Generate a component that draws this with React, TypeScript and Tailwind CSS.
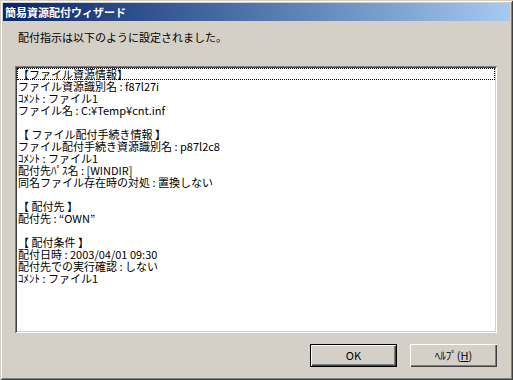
import React from "react";

const lines: string[] = [
  "【ファイル資源情報】",
  "ファイル資源識別名 : f87l27i",
  "ｺﾒﾝﾄ : ファイル1",
  "ファイル名 : C:¥Temp¥cnt.inf",
  "",
  "【 ファイル配付手続き情報 】",
  "ファイル配付手続き資源識別名 : p87l2c8",
  "ｺﾒﾝﾄ : ファイル1",
  "配付先ﾊﾟｽ名 : [WINDIR]",
  "同名ファイル存在時の対処 : 置換しない",
  "",
  "【 配付先 】",
  "配付先 : \u201COWN\u201D",
  "",
  "【 配付条件 】",
  "配付日時 : 2003/04/01 09:30",
  "配付先での実行確認 : しない",
  "ｺﾒﾝﾄ : ファイル1",
];

export default function App() {
  return (
    <div
      className="w-[513px] h-[380px] bg-[#d4d0c8] p-[3px] flex flex-col text-[11px] text-black shadow-[inset_1px_1px_#d4d0c8,inset_-1px_-1px_#404040,inset_2px_2px_#ffffff,inset_-2px_-2px_#808080]"
      style={{ fontFamily: '"Noto Sans CJK JP", "Liberation Sans", sans-serif' }}
    >
      <div className="h-[18px] bg-gradient-to-r from-[#0a246a] to-[#a6caf0] flex items-center pl-[2px]">
        <span className="text-white font-bold text-[11px] leading-[12px]">簡易資源配付ウィザード</span>
      </div>
      <div className="mt-[10px] pl-[15px] h-[12px] leading-[12px]">配付指示は以下のように設定されました。</div>
      <div className="mt-[23px] ml-[12px] w-[482px] h-[267px] bg-white p-[2px] shadow-[inset_1px_1px_#808080,inset_-1px_-1px_#ffffff,inset_2px_2px_#404040,inset_-2px_-2px_#d4d0c8]">
        <div className="flex flex-col">
          {lines.map((l, i) => (
            <div
              key={i}
              className={
                i === 0
                  ? "h-[12px] leading-[12px] pl-px whitespace-pre outline-1 outline-dotted outline-black -outline-offset-1"
                  : "h-[12px] leading-[12px] pl-px whitespace-pre"
              }
            >
              {l}
            </div>
          ))}
        </div>
      </div>
      <div className="mt-[11px] flex justify-end gap-[13px] pr-[13px]">
        <div className="w-[87px] h-[23px] border border-black">
          <div className="w-full h-full flex items-center justify-center shadow-[inset_1px_1px_#ffffff,inset_-1px_-1px_#404040,inset_-2px_-2px_#808080]">
            OK
          </div>
        </div>
        <div className="w-[87px] h-[23px] flex items-center justify-center shadow-[inset_1px_1px_#ffffff,inset_-1px_-1px_#404040,inset_-2px_-2px_#808080]">
          <span>
            ﾍﾙﾌﾟ(<span className="underline">H</span>)
          </span>
        </div>
      </div>
    </div>
  );
}
